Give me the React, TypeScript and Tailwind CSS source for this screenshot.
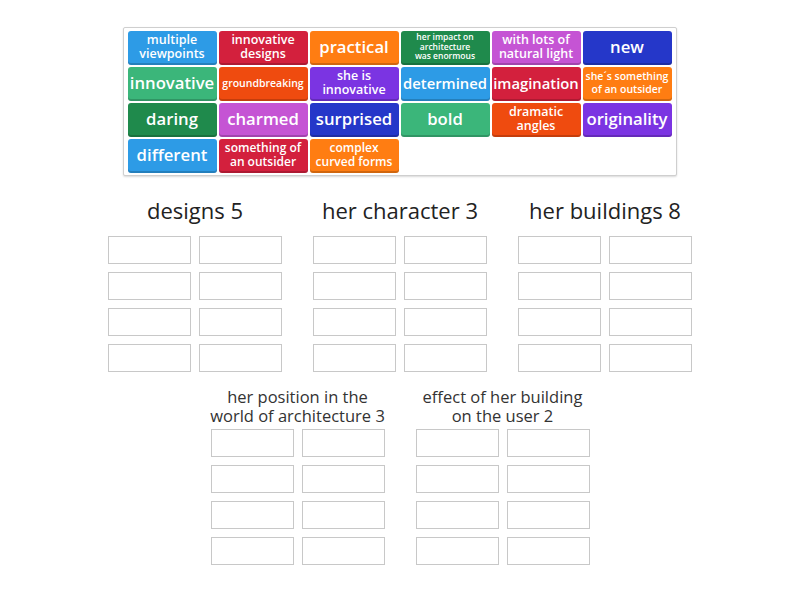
const BLUE = 'bg-[#2d9be6]';
const RED = 'bg-[#d3203d]';
const ORANGE = 'bg-[#ff7d12]';
const DGREEN = 'bg-[#1f8a4c]';
const ORCHID = 'bg-[#c554d4]';
const NAVY = 'bg-[#2537c9]';
const MINT = 'bg-[#3bb67a]';
const ORED = 'bg-[#ef4b0f]';
const PURPLE = 'bg-[#7b34e2]';

type Tile = { text: string; color: string; size: string };

const BIG = 'text-[16.7px] leading-[20px] px-[2px]';
const MID = 'text-[12.5px] leading-[14px] px-[2px]';

const tiles: Tile[] = [
  { text: 'multiple viewpoints', color: BLUE, size: MID },
  { text: 'innovative designs', color: RED, size: MID },
  { text: 'practical', color: ORANGE, size: BIG },
  { text: 'her impact on architecture was enormous', color: DGREEN, size: 'text-[8.5px] leading-[9.5px] px-[14px]' },
  { text: 'with lots of natural light', color: ORCHID, size: MID },
  { text: 'new', color: NAVY, size: BIG },
  { text: 'innovative', color: MINT, size: BIG },
  { text: 'groundbreaking', color: ORED, size: 'text-[10.5px] leading-[14px] px-[1px]' },
  { text: 'she is innovative', color: PURPLE, size: MID },
  { text: 'determined', color: BLUE, size: 'text-[14.8px] leading-[20px] px-[1px]' },
  { text: 'imagination', color: RED, size: 'text-[14.8px] leading-[20px] px-[1px]' },
  { text: 'she´s something of an outsider', color: ORANGE, size: 'text-[10.5px] leading-[12.5px] px-[1px]' },
  { text: 'daring', color: DGREEN, size: BIG },
  { text: 'charmed', color: ORCHID, size: BIG },
  { text: 'surprised', color: NAVY, size: BIG },
  { text: 'bold', color: MINT, size: BIG },
  { text: 'dramatic angles', color: ORED, size: MID },
  { text: 'originality', color: PURPLE, size: BIG },
  { text: 'different', color: BLUE, size: BIG },
  { text: 'something of an outsider', color: RED, size: 'text-[12px] leading-[14px] px-[2px]' },
  { text: 'complex curved forms', color: ORANGE, size: 'text-[12px] leading-[14px] px-[2px]' },
];

function Group({ title, multi }: { title: string; multi?: boolean }) {
  return (
    <div className="flex w-[174px] flex-col items-center">
      {multi ? (
        <div className="mb-[4px] w-[180px] text-center text-[16.5px] leading-[19px] text-[#333]">{title}</div>
      ) : (
        <div className="mb-[14px] mt-[-1px] whitespace-nowrap text-center text-[22px] leading-[24px] text-[#222]">{title}</div>
      )}
      <div className="grid grid-cols-2 gap-x-[8px] gap-y-[8px]">
        {Array.from({ length: 8 }).map((_, i) => (
          <div key={i} className="h-[28px] w-[83px] border border-[#c8c8c8] bg-white" />
        ))}
      </div>
    </div>
  );
}

export default function App() {
  return (
    <div className="h-[600px] w-[800px] bg-white font-['Open_Sans',sans-serif]">
      <div className="flex justify-center pt-[27px]">
        <div className="ml-[-1px] w-[554px] rounded-[2px] border border-[#cfcfcf] bg-white px-[4px] pb-[2px] pt-[3px] shadow-[0_1px_2px_rgba(0,0,0,0.15)]">
          <div className="grid grid-cols-[repeat(6,89px)] gap-[2px]">
            {tiles.map((t) => (
              <div
                key={t.text}
                className={`flex h-[34px] items-center justify-center rounded-[3px] pb-[3px] text-center font-semibold text-white shadow-[inset_0_-2px_0_rgba(0,0,0,0.18)] ${t.color} ${t.size}`}
              >
                {t.text}
              </div>
            ))}
          </div>
        </div>
      </div>
      <div className="mt-[23px] flex justify-center gap-[31px]">
        <Group title="designs 5" />
        <Group title="her character 3" />
        <Group title="her buildings 8" />
      </div>
      <div className="mt-[15px] flex justify-center gap-[31px]">
        <Group title="her position in the world of architecture 3" multi />
        <Group title="effect of her building on the user 2" multi />
      </div>
    </div>
  );
}
